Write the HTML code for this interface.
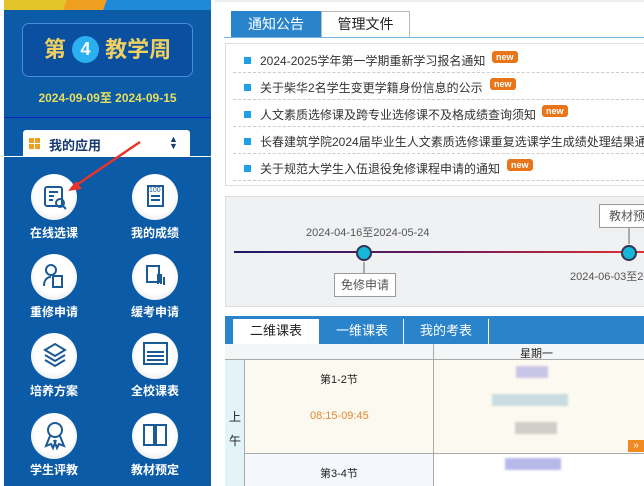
<!DOCTYPE html>
<html><head><meta charset="utf-8"><style>
*{margin:0;padding:0;box-sizing:border-box}
body{width:644px;height:486px;overflow:hidden;background:#fff;font-family:"Liberation Sans","Noto Sans CJK SC",sans-serif;position:relative}
.a{position:absolute}
.side{left:4px;top:0;width:207px;height:486px;background:#0b5ba7}
.ic{width:46px;height:46px;border-radius:50%;background:radial-gradient(circle at 50% 45%,#fff 55%,#d5dbe3 100%)}
.lb{color:#fff;font-weight:bold;font-size:12px;width:80px;text-align:center}
.nt{font-size:12px;color:#333;left:260px}
.sq{width:7px;height:7px;background:#1ea0e6;left:244px}
.dash{left:233px;width:411px;border-top:1px dashed #ccc}
.new{background:#e8751a;color:#fff;font-size:9px;font-weight:bold;padding:0 4px;border-radius:3px;line-height:12px}
</style></head><body>
<div class="a side"></div>
<div class="a" style="left:4px;top:0;width:207px;height:10px;background:#1f8ad8"></div>
<div class="a" style="left:4px;top:0;width:70px;height:10px;background:#e3c52a"></div>
<div class="a" style="left:65px;top:0;width:40px;height:10px;background:#f0a020;transform:skewX(-20deg)"></div>
<div class="a" style="left:22px;top:23px;width:171px;height:54px;border:1px solid #4a8ae0;border-radius:7px;background:#0a4fa0"></div>
<div class="a" style="left:22px;top:36px;width:171px;text-align:center;color:#f0d060;font-weight:bold;font-size:22px;line-height:28px">第 <span style="display:inline-block;width:27px;height:27px;border-radius:50%;background:#2ab0f0;color:#fff;font-size:18px;line-height:27px;vertical-align:2px">4</span> 教学周</div>
<div class="a" style="left:4px;top:89px;width:207px;text-align:center;color:#e8de60;font-weight:bold;font-size:12px">2024-09-09至 2024-09-15</div>
<div class="a" style="left:4px;top:117px;width:207px;height:1px;background:#0a25c0"></div>
<div class="a" style="left:23px;top:130px;width:167px;height:27px;background:#fff;border-radius:3px 3px 0 0"></div>
<div class="a" style="left:4px;top:156px;width:207px;height:1px;background:#fff"></div>
<div class="a" style="left:29px;top:138px;width:11px;height:11px;background:repeating-linear-gradient(90deg,#f0a020 0 5px,transparent 5px 6px);-webkit-mask:repeating-linear-gradient(0deg,#000 0 5px,transparent 5px 6px)"></div>
<div class="a" style="left:49px;top:135px;font-size:13px;font-weight:bold;color:#173a70">我的应用</div>
<div class="a" style="left:169px;top:136px;font-size:9px;color:#173a70;line-height:7px">▲<br>▼</div>
<!-- icons -->
<div class="a ic" style="left:31px;top:174px"></div><div class="a ic" style="left:132px;top:174px"></div>
<div class="a ic" style="left:31px;top:254px"></div><div class="a ic" style="left:132px;top:254px"></div>
<div class="a ic" style="left:31px;top:333px"></div><div class="a ic" style="left:132px;top:333px"></div>
<div class="a ic" style="left:31px;top:413px"></div><div class="a ic" style="left:132px;top:413px"></div>
<svg class="a" style="left:0;top:0" width="215" height="486" fill="none" stroke="#1c5a96" stroke-width="2">
<rect x="45" y="187" width="17" height="19" rx="2"/><path d="M49 192h9M49 196h5M49 200h4"/><circle cx="60" cy="203" r="4"/><path d="M63 206l3 3"/>
<rect x="148" y="186" width="15" height="20"/><path d="M151 196h9M151 200h9"/>
<circle cx="51" cy="270" r="5"/><path d="M44 286c0-7 4-9 7-9"/><rect x="53" y="276" width="9" height="11"/>
<rect x="147" y="266" width="12" height="16"/><path d="M158 284v-10M161 284v-10M164 285v-8"/>
<path d="M45 350l10-6 10 6-10 6zM45 355l10 6 10-6M45 360l10 6 10-6"/>
<rect x="144" y="343" width="23" height="21"/><path d="M147 352h17M147 356h17M147 360h17" stroke-width="2"/>
<circle cx="55" cy="430" r="7"/><path d="M50 436l-4 10 5-2 2 4 3-8M60 436l4 10-5-2-2 4-3-8"/>
<path d="M144 425h10v20h-10zM156 425h10v20h-10z"/>
<path d="M140 142L72 188" stroke="#e8342a" stroke-width="2.5"/><path d="M68 191l14-2-6-8z" fill="#e8342a" stroke="none"/>
</svg>
<div class="a" style="left:149px;top:187px;font-size:7px;color:#1c5a96">100</div>
<div class="a lb" style="left:14px;top:224px">在线选课</div><div class="a lb" style="left:115px;top:224px">我的成绩</div>
<div class="a lb" style="left:14px;top:303px">重修申请</div><div class="a lb" style="left:115px;top:303px">缓考申请</div>
<div class="a lb" style="left:14px;top:382px">培养方案</div><div class="a lb" style="left:115px;top:382px">全校课表</div>
<div class="a lb" style="left:14px;top:461px">学生评教</div><div class="a lb" style="left:115px;top:461px">教材预定</div>
<!-- right -->
<div class="a" style="left:215px;top:0;width:429px;height:2px;background:#eee"></div>
<div class="a" style="left:231px;top:11px;width:90px;height:26px;background:#2a84cc;color:#fff;font-size:14px;text-align:center;line-height:26px">通知公告</div>
<div class="a" style="left:321px;top:11px;width:89px;height:26px;border:1px solid #bbb;border-bottom:none;color:#222;font-size:14px;text-align:center;line-height:25px">管理文件</div>
<div class="a" style="left:224px;top:37px;width:420px;height:1px;background:#7ab4e0"></div>
<div class="a" style="left:225px;top:43px;width:420px;height:143px;border:1px solid #ddd"></div>
<div class="a sq" style="top:57px"></div><div class="a nt" style="top:52px">2024-2025学年第一学期重新学习报名通知</div><div class="a new" style="left:492px;top:51px">new</div>
<div class="a dash" style="top:72px"></div>
<div class="a sq" style="top:84px"></div><div class="a nt" style="top:79px">关于柴华2名学生变更学籍身份信息的公示</div><div class="a new" style="left:490px;top:78px">new</div>
<div class="a dash" style="top:99px"></div>
<div class="a sq" style="top:111px"></div><div class="a nt" style="top:106px">人文素质选修课及跨专业选修课不及格成绩查询须知</div><div class="a new" style="left:542px;top:105px">new</div>
<div class="a dash" style="top:126px"></div>
<div class="a sq" style="top:138px"></div><div class="a nt" style="top:133px;white-space:nowrap">长春建筑学院2024届毕业生人文素质选修课重复选课学生成绩处理结果通知</div>
<div class="a dash" style="top:153px"></div>
<div class="a sq" style="top:165px"></div><div class="a nt" style="top:160px">关于规范大学生入伍退役免修课程申请的通知</div><div class="a new" style="left:507px;top:159px">new</div>
<div class="a dash" style="top:180px"></div>
<!-- timeline -->
<div class="a" style="left:225px;top:196px;width:420px;height:111px;background:#f0f1f3;border:1px solid #ddd"></div>
<div class="a" style="left:234px;top:251px;width:410px;height:2px;background:linear-gradient(90deg,#1a1a6a,#6a1a5a 50%,#e03030)"></div>
<div class="a" style="left:306px;top:224px;font-size:11px;color:#555">2024-04-16至2024-05-24</div>
<div class="a" style="left:356px;top:245px;width:16px;height:16px;border-radius:50%;background:#14b8d8;border:2px solid #335"></div>
<div class="a" style="left:363px;top:262px;width:2px;height:12px;background:#aaa"></div>
<div class="a" style="left:334px;top:273px;width:62px;height:24px;border:1px solid #999;background:#fff;font-size:12px;color:#555;text-align:center;line-height:22px">免修申请</div>
<div class="a" style="left:599px;top:204px;width:50px;height:24px;border:1px solid #999;background:#fff;font-size:12px;color:#555;line-height:22px;padding-left:9px;white-space:nowrap">教材预定</div>
<div class="a" style="left:628px;top:228px;width:2px;height:16px;background:#aaa"></div>
<div class="a" style="left:621px;top:245px;width:16px;height:16px;border-radius:50%;background:#14b8d8;border:2px solid #335"></div>
<div class="a" style="left:570px;top:268px;font-size:11px;color:#555;white-space:nowrap">2024-06-03至2024</div>
<!-- schedule -->
<div class="a" style="left:225px;top:316px;width:420px;height:28px;background:#2a84cc"></div>
<div class="a" style="left:233px;top:319px;width:86px;height:25px;background:#fff;font-size:13px;color:#222;text-align:center;line-height:24px">二维课表</div>
<div class="a" style="left:319px;top:319px;width:86px;font-size:13px;color:#fff;text-align:center;line-height:24px">一维课表</div>
<div class="a" style="left:403px;top:319px;width:1px;height:25px;background:#fff"></div>
<div class="a" style="left:405px;top:319px;width:82px;font-size:13px;color:#fff;text-align:center;line-height:24px">我的考表</div>
<div class="a" style="left:488px;top:319px;width:1px;height:25px;background:#fff"></div>
<div class="a" style="left:225px;top:344px;width:420px;height:16px;background:#f4f5f7;border-bottom:1px solid #aaa"></div>
<div class="a" style="left:433px;top:344px;width:1px;height:142px;background:#aaa"></div>
<div class="a" style="left:520px;top:345px;font-size:11px;color:#222">星期一</div>
<div class="a" style="left:225px;top:360px;width:20px;height:126px;background:#e2f3fa;border-right:1px solid #aaa"></div>
<div class="a" style="left:229px;top:405px;font-size:12px;color:#222;line-height:24px">上<br>午</div>
<div class="a" style="left:245px;top:360px;width:188px;height:93px;background:#fcfaf0"></div>
<div class="a" style="left:434px;top:360px;width:210px;height:93px;background:#fcfaf0"></div>
<div class="a" style="left:245px;top:453px;width:399px;height:1px;background:#aaa"></div>
<div class="a" style="left:245px;top:454px;width:188px;height:32px;background:#f4f7fb"></div>
<div class="a" style="left:320px;top:371px;font-size:11px;color:#222">第1-2节</div>
<div class="a" style="left:310px;top:410px;font-size:11px;color:#e08a30">08:15-09:45</div>
<div class="a" style="left:320px;top:465px;font-size:11px;color:#222">第3-4节</div>
<div class="a" style="left:516px;top:366px;width:32px;height:12px;background:#c8c4e6;filter:blur(1px)"></div>
<div class="a" style="left:492px;top:394px;width:76px;height:12px;background:#c8dce2;filter:blur(1px)"></div>
<div class="a" style="left:515px;top:422px;width:42px;height:12px;background:#d0cec8;filter:blur(1px)"></div>
<div class="a" style="left:505px;top:458px;width:56px;height:12px;background:#b8b8ea;filter:blur(1px)"></div>
<div class="a" style="left:628px;top:440px;width:16px;height:12px;background:#f08a20;color:#fff;font-size:10px;line-height:12px;text-align:center">»</div>
</body></html>
